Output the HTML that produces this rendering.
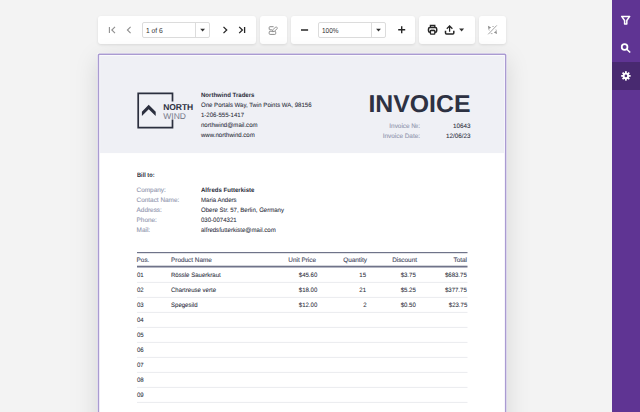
<!DOCTYPE html>
<html><head><meta charset="utf-8">
<style>
*{box-sizing:border-box;margin:0;padding:0}
html,body{width:640px;height:412px;overflow:hidden;background:#f3f3f3;font-family:"Liberation Sans",sans-serif;text-rendering:geometricPrecision}
.abs{position:absolute}
.tb{position:absolute;top:16px;height:27.700px;background:#fff;border-radius:3px;box-shadow:0 1px 3px rgba(0,0,0,.10)}
.side{position:absolute;left:612px;top:0;width:28px;height:412px;background:#5f3493}
.side .act{position:absolute;left:0;top:62px;width:28px;height:27.700px;background:#482970}
.page{position:absolute;left:98px;top:54px;width:408px;height:380px;background:#fff;border-radius:1.500px;box-shadow:0 0 0 .8px rgba(255,255,255,.7),0 5px 24px rgba(0,0,0,.13)}
.hdr{position:absolute;left:100px;top:55.300px;width:404px;height:97.800px;background:#eff0f5}
.pg{position:absolute;left:0;top:0;width:640px;height:412px}
.t{position:absolute;white-space:nowrap;font-size:6.300px;color:#2a2d3a;-webkit-text-stroke:.06px #2a2d3a;line-height:8px;transform:scaleX(.96);transform-origin:0 0}
.t.r{transform-origin:100% 0}
.g{color:#959ab2;-webkit-text-stroke:.12px #959ab2;font-size:6.400px;transform:none}
.h{color:#474b63;-webkit-text-stroke:.12px #474b63;font-size:6.400px;transform:none}
.v{font-size:6.300px;transform:none}
.b{font-weight:bold;-webkit-text-stroke:0}
.r{text-align:right}
.ln{position:absolute;left:136.500px;width:331px;height:1px;background:#e9eaee}
.inp{position:absolute;top:6.200px;height:15.400px;border:1px solid #dcdcdc;border-radius:2px;background:#fff}
.it{position:absolute;top:4.300px;left:3.400px;transform-origin:0 0;font-size:7.200px;line-height:8px;color:#333;white-space:nowrap}
</style></head><body>
<!-- toolbar -->
<div class="tb" style="left:97.800px;width:158.100px">
  <div class="inp" style="left:44.300px;width:67.900px"><span class="it" style="transform:scaleX(.93)">1 of 6</span>
    <div class="abs" style="left:52.200px;top:0;width:1px;height:13.400px;background:#dcdcdc"></div></div>
</div>
<div class="tb" style="left:260px;width:27px"></div>
<div class="tb" style="left:291px;width:123.800px">
  <div class="inp" style="left:27.100px;width:67.500px"><span class="it" style="transform:scaleX(.897);left:3.300px">100%</span>
    <div class="abs" style="left:52.300px;top:0;width:1px;height:13.400px;background:#dcdcdc"></div></div>
</div>
<div class="tb" style="left:419px;width:55.800px"></div>
<div class="tb" style="left:479px;width:27.100px"></div>
<svg class="abs" style="left:0;top:0" width="640" height="60" viewBox="0 0 640 60" fill="none" stroke-linecap="butt">
  <g stroke="#8f8f8f" stroke-width="1.100">
    <path d="M109.400 26.900v6.200M115 26.900L111.800 30l3.200 3.100"/>
    <path d="M130.600 26.900L127.400 30l3.200 3.100"/>
  </g>
  <g stroke="#262626" stroke-width="1.300">
    <path d="M223.500 26.900L226.700 30l-3.200 3.100"/>
    <path d="M239.200 26.900L242.400 30l-3.200 3.100M244.600 26.900v6.200"/>
    <path d="M301 30h7.100" stroke-width="1.500"/>
    <path d="M398.200 29.800h7M401.700 26.300v7" stroke-width="1.400"/>
  </g>
  <g fill="#333" stroke="none">
    <path d="M200.200 28.800h4.800l-2.400 2.600z"/>
    <path d="M376.100 28.800h4.800l-2.400 2.600z"/>
    <path d="M459.100 28.600h5l-2.500 3z"/>
  </g>
  <!-- edit fields icon -->
  <g stroke="#8c8c8c" stroke-width="1">
    <path d="M273.600 26.700h-3.700a.7.700 0 0 0-.7.700v1.700a.7.700 0 0 0 .7.700h2"/>
    <rect x="269.200" y="31.300" width="6.500" height="3.100" rx=".9"/>
    <g transform="translate(274.900 29.300) rotate(45)"><path d="M-1.100 -2a.8.800 0 0 1 .8-.8h.6a.8.800 0 0 1 .8.800v3.900l-1.100 1.500-1.100-1.500z" fill="#fff" stroke-width=".9"/></g>
  </g>
  <!-- printer -->
  <g stroke="#262626" stroke-width="1.300">
    <path d="M430.400 27.600v-2.100h4.400v2.100"/>
    <rect x="428.500" y="27.500" width="8.200" height="4.800" rx="1.500" stroke-width="1.500"/>
    <rect x="430.400" y="30.500" width="4.400" height="3.600" rx=".6" fill="#fff"/>
    <path d="M431 29.400h3.200" stroke="#999" stroke-width=".8"/>
  </g>
  <!-- export -->
  <g stroke="#262626" stroke-width="1.250">
    <path d="M449.600 31.800v-5.600M446.800 28.800l2.800-2.800 2.800 2.800"/>
    <path d="M445.500 30.800v2.100a1 1 0 0 0 1 1h6.300a1 1 0 0 0 1-1V30.800" stroke-width="1.500"/>
  </g>
  <!-- percent-ish -->
  <g stroke="#9a9a9a" stroke-width=".9">
    <path d="M496.800 25.400l-8.600 8.900"/>
    <path d="M492.400 26.500h1.300M490.800 33.600h1.700M488.800 29.200q.1 .8.500 1.300M496.400 30.800q-.1-.8-.5-1.300" stroke-width=".8"/>
  </g>
  <g fill="#8f8f8f" stroke="none">
    <path d="M487.900 25.800l3.200 1.600-2.600 1.800z"/>
    <path d="M497.100 34l-3.300-1.400 2.600-1.800z"/>
  </g>
</svg>

<!-- sidebar -->
<div class="side"><div class="act"></div></div>
<svg class="abs" style="left:612px;top:0" width="28" height="100" viewBox="612 0 28 100" fill="none" stroke="#fff">
  <path d="M621.700 16.400h8l-2.900 4.100v3.600h-2.200v-3.600z" stroke-width="1.500" stroke-linejoin="round"/>
  <circle cx="624.600" cy="47" r="2.850" stroke-width="1.750"/><path d="M626.800 49.200l3.400 3.300" stroke-width="1.600"/>
  <circle cx="625.900" cy="75.900" r="2.250" stroke-width="1.900"/>
  <g fill="#fff" stroke="none"><rect x="-0.9" y="-4.7" width="1.800" height="2.200" transform="translate(625.900 75.900) rotate(0)"/><rect x="-0.9" y="-4.7" width="1.800" height="2.200" transform="translate(625.900 75.900) rotate(45)"/><rect x="-0.9" y="-4.7" width="1.800" height="2.200" transform="translate(625.900 75.900) rotate(90)"/><rect x="-0.9" y="-4.7" width="1.800" height="2.200" transform="translate(625.900 75.900) rotate(135)"/><rect x="-0.9" y="-4.7" width="1.800" height="2.200" transform="translate(625.900 75.900) rotate(180)"/><rect x="-0.9" y="-4.7" width="1.800" height="2.200" transform="translate(625.900 75.900) rotate(225)"/><rect x="-0.9" y="-4.7" width="1.800" height="2.200" transform="translate(625.900 75.900) rotate(270)"/><rect x="-0.9" y="-4.7" width="1.800" height="2.200" transform="translate(625.900 75.900) rotate(315)"/></g>
</svg>

<!-- page -->
<div class="page"></div>
<svg class="abs" style="left:0;top:0" width="640" height="412" viewBox="0 0 640 412">
 <rect x="96.900" y="52.700" width="410.200" height="400" rx="2" fill="#fff" opacity=".55"/>
 <rect x="97.700" y="53.400" width="408.700" height="400" rx="1.600" fill="#aa9bd1"/>
 <rect x="99.200" y="54.900" width="405.700" height="400" rx=".5" fill="#fff"/>
 <rect x="100.100" y="55.700" width="403.900" height="97.400" fill="#eff0f5"/>
 <rect x="137" y="252" width="330.500" height="1.200" fill="#6f7389"/>
 <rect x="137" y="265.700" width="330.500" height="1.800" fill="#6f7389"/>
 <rect x="137" y="281.9" width="330.500" height="1" fill="#eaebef"/>
 <rect x="137" y="296.9" width="330.500" height="1" fill="#eaebef"/>
 <rect x="137" y="311.9" width="330.500" height="1" fill="#eaebef"/>
 <rect x="137" y="326.9" width="330.500" height="1" fill="#eaebef"/>
 <rect x="137" y="341.9" width="330.500" height="1" fill="#eaebef"/>
 <rect x="137" y="356.9" width="330.500" height="1" fill="#eaebef"/>
 <rect x="137" y="371.9" width="330.500" height="1" fill="#eaebef"/>
 <rect x="137" y="386.9" width="330.500" height="1" fill="#eaebef"/>
 <rect x="137" y="401.9" width="330.500" height="1" fill="#eaebef"/>
</svg>
<div class="pg">
 <!-- logo -->
 <svg class="abs" style="left:130px;top:85px" width="50" height="50" viewBox="130 85 50 50"><path d="M172.500 101.400V93.300H138.200v34.300h34.300v-8" fill="none" stroke="#2b2f3e" stroke-width="1.700"/><path d="M148.700 104.800l7 6.900v4.400l-7-6.800-6.800 6.800v-4.400z" fill="#2b2f3e"/></svg>
 <div class="t b" style="left:163.300px;top:102px;font-size:8.500px;line-height:10px;letter-spacing:-.1px;transform:translateY(.3px);color:#2b2f3e">NORTH</div>
 <div class="t" style="left:163.300px;top:111px;font-size:8.500px;line-height:10px;transform:none;color:#868998">WIND</div>
 <div class="t b" style="left:200.500px;top:92px">Northwind Traders</div>
 <div class="t" style="left:200.500px;top:102px">One Portals Way, Twin Points WA, 98156</div>
 <div class="t" style="left:200.500px;top:112px">1-206-555-1417</div>
 <div class="t" style="left:200.500px;top:122px">northwind@mail.com</div>
 <div class="t" style="left:200.500px;top:132px">www.northwind.com</div>
 <div class="t b" style="right:169.800px;top:89px;font-size:24.450px;line-height:30px;transform-origin:100% 0;transform:scaleX(1.016) translateY(.5px);color:#2d3142">INVOICE</div>
 <div class="t g r" style="right:220px;top:122.5px">Invoice №:</div>
 <div class="t g r" style="right:220px;top:132.5px">Invoice Date:</div>
 <div class="t v r" style="right:169.500px;top:122.5px">10643</div>
 <div class="t v r" style="right:169.500px;top:132.5px">12/06/23</div>

 <div class="t b" style="left:136.600px;top:172px;transform:scaleX(.895)">Bill to:</div>
 <div class="t g" style="left:136.600px;top:187px">Company:</div>
 <div class="t g" style="left:136.600px;top:196.5px">Contact Name:</div>
 <div class="t g" style="left:136.600px;top:207px">Address:</div>
 <div class="t g" style="left:136.600px;top:216.5px">Phone:</div>
 <div class="t g" style="left:136.600px;top:227px">Mail:</div>
 <div class="t b" style="left:200.600px;top:187px">Alfreds Futterkiste</div>
 <div class="t" style="left:200.600px;top:196.5px">Maria Anders</div>
 <div class="t" style="left:200.600px;top:207px">Obere Str. 57, Berlin, Germany</div>
 <div class="t" style="left:200.600px;top:216.5px">030-0074321</div>
 <div class="t" style="left:200.600px;top:227px">alfredsfutterkiste@mail.com</div>

 <!-- table -->
 <div class="t h" style="left:136.600px;top:256.5px">Pos.</div>
 <div class="t h" style="left:171px;top:256.5px">Product Name</div>
 <div class="t h r" style="right:324px;top:256.5px">Unit Price</div>
 <div class="t h r" style="right:273px;top:256.5px">Quantity</div>
 <div class="t h r" style="right:223px;top:256.5px">Discount</div>
 <div class="t h r" style="right:173px;top:256.5px">Total</div>
<div class="t" style="left:136.600px;top:272px">01</div><div class="t" style="left:171px;top:272px">Rössle Sauerkraut</div><div class="t r" style="right:322.800px;top:272px">$45.60</div><div class="t r" style="right:273.800px;top:272px">15</div><div class="t r" style="right:223.800px;top:272px">$3.75</div><div class="t r" style="right:173px;top:272px">$683.75</div>
<div class="t" style="left:136.600px;top:287px">02</div><div class="t" style="left:171px;top:287px">Chartreuse verte</div><div class="t r" style="right:322.800px;top:287px">$18.00</div><div class="t r" style="right:273.800px;top:287px">21</div><div class="t r" style="right:223.800px;top:287px">$5.25</div><div class="t r" style="right:173px;top:287px">$377.75</div>
<div class="t" style="left:136.600px;top:302px">03</div><div class="t" style="left:171px;top:302px">Spegesild</div><div class="t r" style="right:322.800px;top:302px">$12.00</div><div class="t r" style="right:273.800px;top:302px">2</div><div class="t r" style="right:223.800px;top:302px">$0.50</div><div class="t r" style="right:173px;top:302px">$23.75</div>
<div class="t" style="left:136.600px;top:317px">04</div>
<div class="t" style="left:136.600px;top:332px">05</div>
<div class="t" style="left:136.600px;top:347px">06</div>
<div class="t" style="left:136.600px;top:362px">07</div>
<div class="t" style="left:136.600px;top:377px">08</div>
<div class="t" style="left:136.600px;top:392px">09</div>
</div>
</body></html>
